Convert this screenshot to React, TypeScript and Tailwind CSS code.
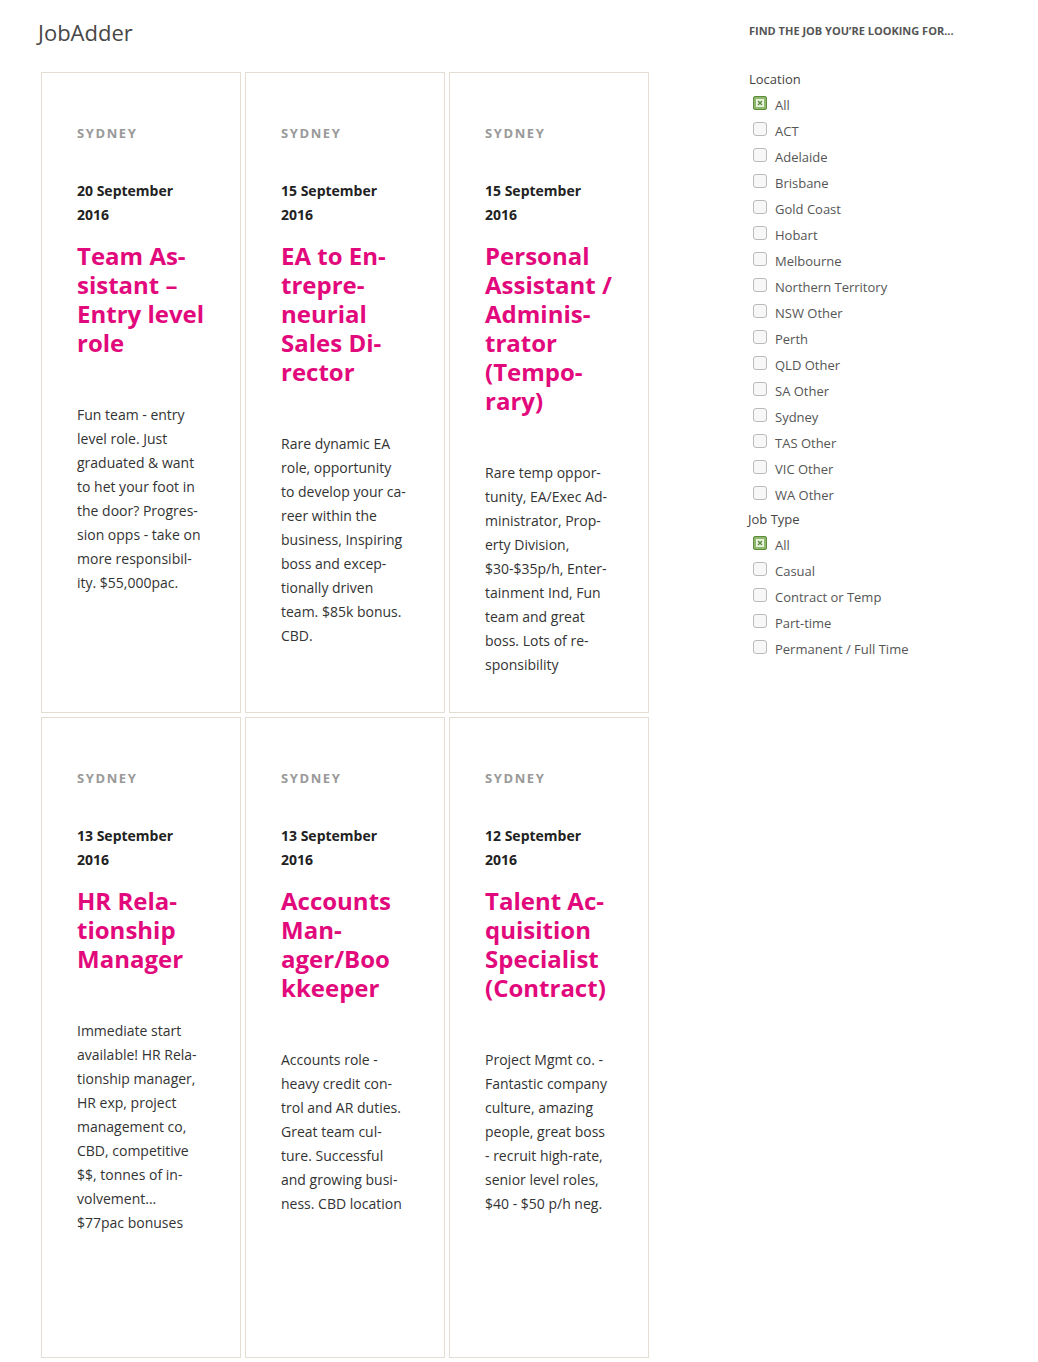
import { FC, ReactElement } from 'react'

type Job = {
  date: string[]
  title: string[]
  body: string[]
}

const jobs: Job[] = [
  {
    date: ['20 September', '2016'],
    title: ['Team As-', 'sistant –', 'Entry level', 'role'],
    body: [
      'Fun team - entry',
      'level role. Just',
      'graduated & want',
      'to het your foot in',
      'the door? Progres-',
      'sion opps - take on',
      'more responsibil-',
      'ity. $55,000pac.',
    ],
  },
  {
    date: ['15 September', '2016'],
    title: ['EA to En-', 'trepre-', 'neurial', 'Sales Di-', 'rector'],
    body: [
      'Rare dynamic EA',
      'role, opportunity',
      'to develop your ca-',
      'reer within the',
      'business, Inspiring',
      'boss and excep-',
      'tionally driven',
      'team. $85k bonus.',
      'CBD.',
    ],
  },
  {
    date: ['15 September', '2016'],
    title: ['Personal', 'Assistant /', 'Adminis-', 'trator', '(Tempo-', 'rary)'],
    body: [
      'Rare temp oppor-',
      'tunity, EA/Exec Ad-',
      'ministrator, Prop-',
      'erty Division,',
      '$30-$35p/h, Enter-',
      'tainment Ind, Fun',
      'team and great',
      'boss. Lots of re-',
      'sponsibility',
    ],
  },
  {
    date: ['13 September', '2016'],
    title: ['HR Rela-', 'tionship', 'Manager'],
    body: [
      'Immediate start',
      'available! HR Rela-',
      'tionship manager,',
      'HR exp, project',
      'management co,',
      'CBD, competitive',
      '$$, tonnes of in-',
      'volvement...',
      '$77pac bonuses',
    ],
  },
  {
    date: ['13 September', '2016'],
    title: ['Accounts', 'Man-', 'ager/Boo', 'kkeeper'],
    body: [
      'Accounts role -',
      'heavy credit con-',
      'trol and AR duties.',
      'Great team cul-',
      'ture. Successful',
      'and growing busi-',
      'ness. CBD location',
    ],
  },
  {
    date: ['12 September', '2016'],
    title: ['Talent Ac-', 'quisition', 'Specialist', '(Contract)'],
    body: [
      'Project Mgmt co. -',
      'Fantastic company',
      'culture, amazing',
      'people, great boss',
      '- recruit high-rate,',
      'senior level roles,',
      '$40 - $50 p/h neg.',
    ],
  },
]

const locations = [
  'All',
  'ACT',
  'Adelaide',
  'Brisbane',
  'Gold Coast',
  'Hobart',
  'Melbourne',
  'Northern Territory',
  'NSW Other',
  'Perth',
  'QLD Other',
  'SA Other',
  'Sydney',
  'TAS Other',
  'VIC Other',
  'WA Other',
]

const jobTypes = ['All', 'Casual', 'Contract or Temp', 'Part-time', 'Permanent / Full Time']

const JobCard: FC<{ job: Job }> = ({ job }): ReactElement => {
  return (
    <div className="border border-[#e4ddd4] px-[35px] pt-[48px] pb-[35px]">
      <div className="text-[13px] leading-[24px] font-bold tracking-[1.6px] text-[#999]">SYDNEY</div>
      <div className="mt-[34px] text-[14px] leading-[24px] font-bold text-[#222] whitespace-nowrap">
        {job.date.map((d) => (
          <div key={d}>{d}</div>
        ))}
      </div>
      <div className="mt-[14px] text-[24px] leading-[29px] font-bold text-[#e2097c] whitespace-nowrap">
        {job.title.map((t, i) => (
          <div key={i}>{t}</div>
        ))}
      </div>
      <div className="mt-[46px] text-[14px] leading-[24px] text-[#333] whitespace-nowrap">
        {job.body.map((b, i) => (
          <div key={i}>{b}</div>
        ))}
      </div>
    </div>
  )
}

const Box: FC<{ checked?: boolean }> = ({ checked }): ReactElement => {
  if (checked) {
    return (
      <span className="flex items-center justify-center w-[14px] h-[14px] rounded-[2px] border border-[#5d8a3f] bg-[#8dba6c] -translate-y-[1px]">
        <span className="flex items-center justify-center w-[8px] h-[8px] bg-[#e8f2df]">
          <svg width="6" height="6" viewBox="0 0 6 6">
            <path d="M1 1 L5 5 M5 1 L1 5" stroke="#5d8a3f" strokeWidth="1.4" />
          </svg>
        </span>
      </span>
    )
  }
  return (
    <span className="block w-[14px] h-[14px] rounded-[3px] border border-[#bbb] bg-[#f7f7f7] -translate-y-[1px]" />
  )
}

const FilterGroup: FC<{ label: string; items: string[]; shift?: boolean }> = ({
  label,
  items,
  shift,
}): ReactElement => {
  return (
    <div>
      <div className={shift ? 'text-[13px] leading-[24px] text-[#444] -ml-[1px]' : 'text-[13px] leading-[24px] text-[#444]'}>
        {label}
      </div>
      {items.map((item, i) => (
        <div key={item} className="flex items-center h-[26px] pl-[4px]">
          <Box checked={i === 0} />
          <span className="ml-[8px] text-[13px] text-[#555] translate-y-[2px]">{item}</span>
        </div>
      ))}
    </div>
  )
}

const App: FC = (): ReactElement => {
  return (
    <div className="w-[1038px] bg-white font-['Open_Sans',sans-serif] flex">
      <div className="pl-[41px]">
        <div className="h-[72px] -ml-[3px] pt-[16px] text-[22px] leading-[32px] text-[#474747]">JobAdder</div>
        <div className="grid grid-cols-[200px_200px_200px] auto-rows-fr gap-[4px]">
          {jobs.map((job, i) => (
            <JobCard key={i} job={job} />
          ))}
        </div>
      </div>
      <div className="ml-[100px] pt-[23px] w-[240px]">
        <div className="text-[11px] leading-[16px] font-bold text-[#555] uppercase">Find the job you’re looking for...</div>
        <div className="mt-[28px]">
          <FilterGroup label="Location" items={locations} />
        </div>
        <FilterGroup label="Job Type" items={jobTypes} shift />
      </div>
    </div>
  )
}

export default App
